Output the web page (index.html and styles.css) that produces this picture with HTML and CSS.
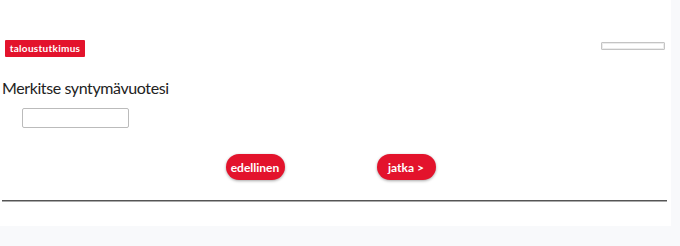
FILE: index.html
```html
<html>
    <head>
        <title>Taloustutkimus</title>
        <link rel="stylesheet" href="styles.css">
    </head>
    <body>
        <div class="page">
            <div class="header">
                <span class="logo">taloustutkimus</span>
                <div class="progress"><div class="progress-fill"></div></div>
            </div>
            <div class="question">
                <h2 class="question-text">Merkitse syntymävuotesi</h2>
                <input type="text" class="textinput">
            </div>
            <div class="nav">
                <button class="btn btn-prev">edellinen</button>
                <button class="btn btn-next">jatka &gt;</button>
            </div>
            <hr class="divider">
        </div>
    </body>
</html>
```

FILE: styles.css
```css
* {
box-sizing: border-box;
}
body {
margin: 0;
background-color: #f8f9fb;
font-family: "Lato", "Noto Sans", sans-serif;
}
.page {
width: 671px;
height: 226px;
background-color: #FFF;
padding-top: 40px;
}
.header {
display: flex;
justify-content: space-between;
align-items: flex-start;
padding: 0 6px 0 5px;
}
.logo {
display: inline-block;
width: 80px;
text-align: center;
background-color: #e3132c;
color: #FFF;
font-size: 10px;
font-weight: bold;
line-height: 17px;
height: 17px;
border-radius: 1px;
letter-spacing: 0.3px;
}
.progress {
margin-top: 2px;
width: 64px;
height: 8px;
border: 1px solid #c4c4c4;
border-radius: 1px;
box-shadow: inset 0 0 0 1px #ececec;
}
.progress-fill {
width: 0;
}
.question {
padding-left: 2px;
}
.question-text {
margin: 21px 0 10px 0;
font-size: 16px;
font-weight: normal;
color: #222;
line-height: 20px;
letter-spacing: -0.4px;
}
.textinput {
margin-left: 20px;
width: 107px;
height: 20px;
border: 1px solid #bbb;
border-radius: 2px;
outline: none;
}
.nav {
display: flex;
justify-content: center;
gap: 92px;
margin-top: 26px;
padding-right: 10px;
}
.btn {
cursor: pointer;
width: 59px;
height: 26px;
padding: 0;
border: none;
border-radius: 13px;
background-color: #e3132c;
color: #FFF;
font-family: inherit;
font-size: 12px;
font-weight: bold;
box-shadow: 0 1px 3px rgba(0, 0, 0, 0.35);
}
.divider {
margin: 20px 4px 0 2px;
border: none;
border-top: 1px solid #555;
border-bottom: 1px solid #aaa;
height: 0;
}
```
